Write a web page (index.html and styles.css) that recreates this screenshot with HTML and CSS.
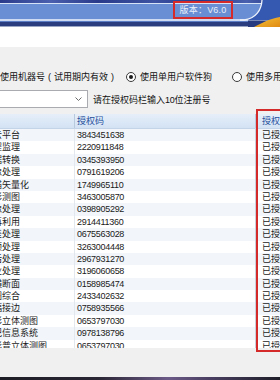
FILE: index.html
```html
<!DOCTYPE html>
<html lang="zh">
<head>
<meta charset="utf-8">
<title>授权</title>
<link rel="stylesheet" href="styles.css">
</head>
<body>
<div class="app">
  <header class="banner">
    <div class="stripe s-top"></div>
    <div class="stripe s-hl"></div>
    <div class="stripe s-main"></div>
    <div class="stripe s-hl2"></div>
    <div class="stripe s-mid"></div>
    <div class="stripe s-dark"></div>
    <div class="stripe s-edge"></div>
    <svg class="corner" width="40" height="27" viewBox="0 0 40 27">
      <defs>
        <linearGradient id="og" x1="0" y1="0" x2="1" y2="1">
          <stop offset="0" stop-color="#f6c43a"/>
          <stop offset="1" stop-color="#e08a12"/>
        </linearGradient>
      </defs>
      <path d="M22,0 C21.5,10 16,18.5 4,20 L40,20 L40,0 Z" fill="#3558b0"/>
      <path d="M8,20.5 L40,20.5 L40,27 L8,27 Z" fill="#273b7e"/>
      <path d="M14,27 C22,23 30,18.5 40,17 L40,27 Z" fill="url(#og)"/>
      <path d="M22,0 C21.5,10 16,18.5 4,20 L0,20" fill="none" stroke="#eef3fb" stroke-width="1.3"/>
    </svg>
    <div class="version">版本：V6.0</div>
  </header>
  <div class="whitegap"></div>
  <main class="panel">
    <div class="radios">
      <label class="opt opt-first"><span class="radio"></span><span>使用机器号<span class="par">(</span>试用期内有效<span class="par">)</span></span></label>
      <label class="opt opt-second"><span class="radio checked"></span><span>使用单用户软件狗</span></label>
      <label class="opt"><span class="radio"></span><span>使用多用户软件狗</span></label>
    </div>
    <div class="combo-row">
      <div class="combo">
        <svg class="chev" width="7" height="4" viewBox="0 0 7 4"><polyline points="0.5,0.5 3.5,3.5 6.5,0.5" fill="none" stroke="#6d6d6d" stroke-width="1"/></svg>
      </div>
      <span class="hint">请在授权码栏输入<span class="num">10</span>位注册号</span>
    </div>
    <div class="grid">
      <div class="row head">
        <div class="cell c1">模块名称</div>
        <div class="cell c2">授权码</div>
        <div class="cell c3">授权状态</div>
      </div>
      <div class="row"><div class="cell c1">地理信息云平台</div><div class="cell c2 num">3843451638</div><div class="cell c3">已授权</div></div>
      <div class="row"><div class="cell c1">数字化工程监理</div><div class="cell c2 num">2220911848</div><div class="cell c3">已授权</div></div>
      <div class="row"><div class="cell c1">坐标系数据转换</div><div class="cell c2 num">0345393950</div><div class="cell c3">已授权</div></div>
      <div class="row"><div class="cell c1">多光谱影像处理</div><div class="cell c2 num">0791619206</div><div class="cell c3">已授权</div></div>
      <div class="row"><div class="cell c1">地形图扫描矢量化</div><div class="cell c2 num">1749965110</div><div class="cell c3">已授权</div></div>
      <div class="row"><div class="cell c1">全数字摄影测图</div><div class="cell c2 num">3463005870</div><div class="cell c3">已授权</div></div>
      <div class="row"><div class="cell c1">无人机影像处理</div><div class="cell c2 num">0398905292</div><div class="cell c3">已授权</div></div>
      <div class="row"><div class="cell c1">土地资源再利用</div><div class="cell c2 num">2914411360</div><div class="cell c3">已授权</div></div>
      <div class="row"><div class="cell c1">控制网平差处理</div><div class="cell c2 num">0675563028</div><div class="cell c3">已授权</div></div>
      <div class="row"><div class="cell c1">大气校正预处理</div><div class="cell c2 num">3263004448</div><div class="cell c3">已授权</div></div>
      <div class="row"><div class="cell c1">影像镶嵌后处理</div><div class="cell c2 num">2967931270</div><div class="cell c3">已授权</div></div>
      <div class="row"><div class="cell c1">像控点外业处理</div><div class="cell c2 num">3196060658</div><div class="cell c3">已授权</div></div>
      <div class="row"><div class="cell c1">道路工程横断面</div><div class="cell c2 num">0158985474</div><div class="cell c3">已授权</div></div>
      <div class="row"><div class="cell c1">地形图制图综合</div><div class="cell c2 num">2433402632</div><div class="cell c3">已授权</div></div>
      <div class="row"><div class="cell c1">地形图图幅接边</div><div class="cell c2 num">0758935566</div><div class="cell c3">已授权</div></div>
      <div class="row"><div class="cell c1">全数字摄影立体测图</div><div class="cell c2 num">0653797030</div><div class="cell c3">已授权</div></div>
      <div class="row"><div class="cell c1">不动产登记信息系统</div><div class="cell c2 num">0978138796</div><div class="cell c3">已授权</div></div>
      <div class="row"><div class="cell c1">卫星遥感影普立体测图</div><div class="cell c2 num">0653797030</div><div class="cell c3">已授权</div></div>
    </div>
    <div class="mark"></div>
  </main>
  <div class="taskbar"></div>
</div>
</body>
</html>
```
FILE: styles.css
```css
html, body {
  margin: 0;
  padding: 0;
}
body {
  width: 280px;
  height: 380px;
  overflow: hidden;
  background: #f0f0f0;
  font-family: "Liberation Sans", "Noto Sans CJK SC", sans-serif;
  font-size: 9px;
  color: #1a1a1a;
}
.app {
  width: 280px;
  height: 380px;
  overflow: hidden;
  display: flex;
  flex-direction: column;
}

/* banner */
.banner {
  position: relative;
  height: 27px;
  flex: none;
  display: flex;
  flex-direction: column;
  overflow: hidden;
}
.stripe { flex: none; }
.s-top {
  height: 3px;
  background: linear-gradient(90deg, #2b3b8c, #4a5fae 18%, #2a3a8a 35%, #3d52a2 55%, #27378a 72%, #4860ae 88%, #2a3a8a);
}
.s-hl { height: 1px; background: #d6e2f6; }
.s-main { height: 15px; background: #6a8ed3; }
.s-hl2 { height: 2px; background: #cddaf1; }
.s-mid { height: 1px; background: #5b7dc6; }
.s-dark { height: 4px; background: #2b3e80; }
.s-edge { height: 1px; background: #9aa6c4; }
.corner {
  position: absolute;
  right: 0;
  top: 0;
}
.version {
  position: absolute;
  left: 173px;
  top: 1px;
  width: 60px;
  height: 18px;
  box-sizing: border-box;
  border: 2px solid #d42a2a;
  color: #e8eef9;
  font-size: 9px;
  line-height: 15px;
  text-align: center;
  letter-spacing: 0.2px;
}

.whitegap {
  height: 20px;
  flex: none;
  background: #ffffff;
}

/* panel */
.panel {
  position: relative;
  height: 330px;
  flex: none;
  background: #f0f0f0;
  padding-top: 23px;
  box-sizing: border-box;
  overflow: hidden;
}
.radios {
  display: flex;
  align-items: center;
  height: 13px;
  margin-left: -14px;
  white-space: nowrap;
}
.opt {
  display: flex;
  align-items: center;
  gap: 4px;
  flex: none;
  color: #111;
}
.par {
  display: inline-block;
  width: 9px;
  text-align: center;
}
.opt-first { margin-right: 9px; }
.opt-second { margin-right: 20px; }
.radio {
  width: 10px;
  height: 10px;
  box-sizing: border-box;
  border: 1px solid #3a3a3a;
  border-radius: 50%;
  background: #fff;
  display: flex;
  align-items: center;
  justify-content: center;
  flex: none;
}
.radio.checked::after {
  content: "";
  width: 4px;
  height: 4px;
  border-radius: 50%;
  background: #1c1c1c;
}

.combo-row {
  display: flex;
  align-items: center;
  margin-top: 7px;
  height: 18px;
  white-space: nowrap;
}
.combo {
  width: 98px;
  height: 18px;
  margin-left: -10px;
  box-sizing: border-box;
  border: 1px solid #a9abb0;
  background: #fff;
  display: flex;
  align-items: center;
  justify-content: flex-end;
  padding-right: 5px;
  flex: none;
}
.hint {
  margin-left: 5px;
  color: #111;
}
.num {
  font-family: "Liberation Sans", sans-serif;
  letter-spacing: -0.3px;
}

/* grid */
.grid {
  margin-top: 6px;
  margin-left: -45px;
  height: 234px;
  overflow: hidden;
  background: #fff;
}
.row {
  display: grid;
  grid-template-columns: 120px 181px 64px;
  height: 12.4px;
  line-height: 12.4px;
  white-space: nowrap;
}
.row:nth-child(even) { background: #f2f6fb; }
.row.head {
  height: 15px;
  line-height: 15px;
  background: linear-gradient(#e6eff9, #d3e2f4);
  border-bottom: 1px solid #c3d3e8;
  box-sizing: border-box;
  color: #1f4e9c;
}
.cell {
  overflow: hidden;
}
.c1 {
  padding-left: 2px;
  border-right: 1px solid #e3e8ee;
}
.c2 {
  padding-left: 2px;
  border-right: 1px solid #c9d1dc;
}
.c3 {
  padding-left: 6px;
}
.head .c1, .head .c2 { border-right-color: #b9c9de; }

.mark {
  position: absolute;
  left: 256px;
  top: 62px;
  width: 40px;
  height: 243px;
  box-sizing: border-box;
  border: 2px solid #d42a2a;
}

.taskbar {
  height: 3px;
  flex: none;
  background: linear-gradient(90deg, #1d1d25, #2a2634 35%, #6b5a86 60%, #4a3f62 75%, #1e1e28);
}
```
